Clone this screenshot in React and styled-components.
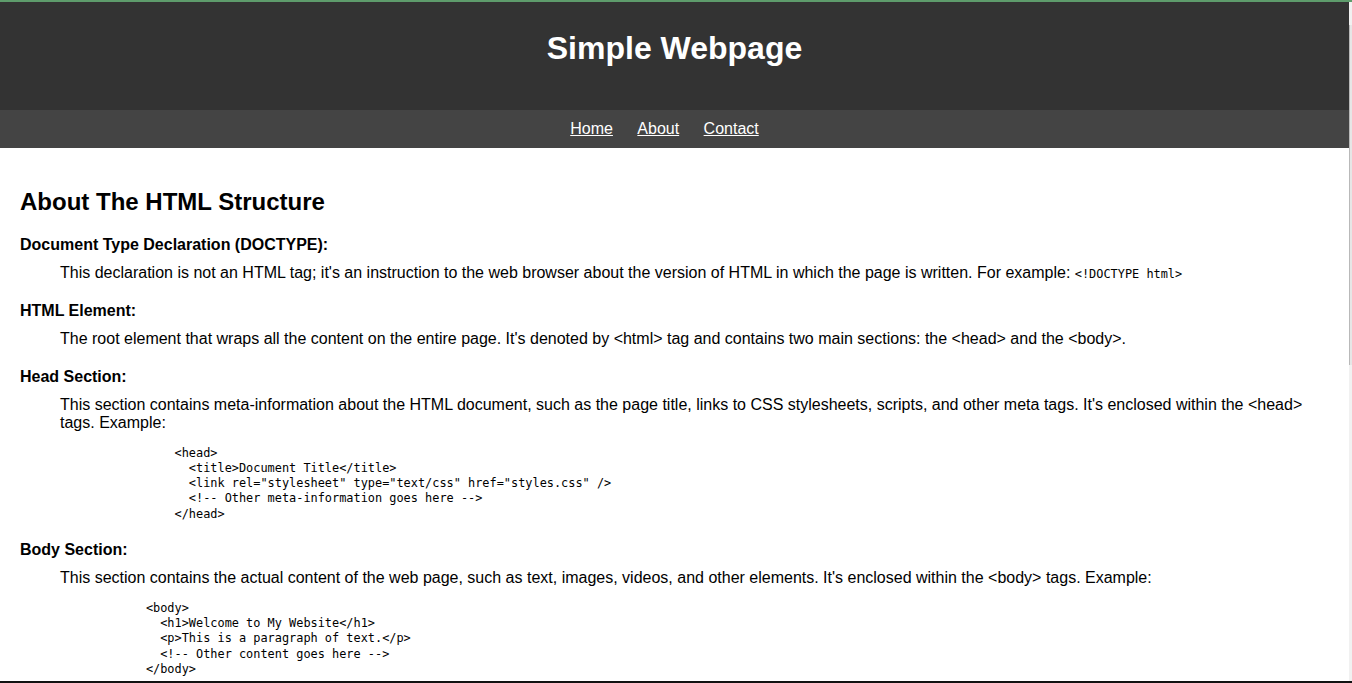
import React from "react";
import styled, { createGlobalStyle } from "styled-components";

const Global = createGlobalStyle`
  html, body { margin: 0; padding: 0; }
  html { scrollbar-width: none; }
  ::-webkit-scrollbar { display: none; }
  body {
    margin-right: 3px;
    font-family: "Liberation Sans", Arial, sans-serif;
    font-size: 16px;
    color: #000;
    background: #fff;
  }
`;

const TopLine = styled.div`
  position: fixed;
  top: 0;
  left: 0;
  right: 0;
  height: 2px;
  background: #5e9c6c;
  z-index: 10;
`;

const BottomLine = styled.div`
  position: fixed;
  bottom: 0;
  left: 0;
  right: 0;
  height: 2px;
  background: #111;
  z-index: 10;
`;

const ScrollTrack = styled.div`
  position: fixed;
  top: 2px;
  right: 0;
  bottom: 0;
  width: 3px;
  background: #f1f1f1;
  z-index: 9;
`;

const ScrollThumb = styled.div`
  position: absolute;
  top: 23px;
  left: 0;
  width: 3px;
  height: 340px;
  background: #e6e6e6;
  border-left: 1px solid #b9b9b9;
  box-sizing: border-box;
`;

const Header = styled.header`
  background: #333;
  color: #fff;
  text-align: center;
  padding: 30px 0 43px;
`;

const Title = styled.h1`
  margin: 0;
  font-size: 32px;
  line-height: 37px;
  font-weight: bold;
`;

const Nav = styled.nav`
  background: #444;
  display: flex;
  justify-content: center;
  gap: 4.45px;
  padding: 10px 0;
  line-height: 18px;
`;

const NavLink = styled.a`
  color: #fff;
  text-decoration: underline;
  margin-right: 20px;
`;

const Main = styled.main`
  padding: 0 20px 20px;
  display: flow-root;
`;

const Heading = styled.h2`
  font-size: 24px;
  line-height: 27.6px;
  margin: 40px 0 20px;
`;

const List = styled.dl`
  margin: 0;
`;

const Term = styled.dt`
  font-weight: bold;
  line-height: 18px;
  margin-top: 20px;
  &:first-child { margin-top: 0; }
`;

const Desc = styled.dd`
  margin: 10px 0 0 40px;
  line-height: 18px;
`;

const Code = styled.code`
  font-family: "DejaVu Sans Mono", "Liberation Mono", monospace;
  font-size: 11.9px;
  line-height: 1;
`;

const Pre = styled.pre`
  font-family: "DejaVu Sans Mono", "Liberation Mono", monospace;
  font-size: 11.9px;
  line-height: 15.25px;
  margin: 14px 0 -1px;
  padding-left: ${(p) => p.$indent}ch;
`;

const headCode = `<head>
  <title>Document Title</title>
  <link rel="stylesheet" type="text/css" href="styles.css" />
  <!-- Other meta-information goes here -->
</head>`;

const bodyCode = `<body>
  <h1>Welcome to My Website</h1>
  <p>This is a paragraph of text.</p>
  <!-- Other content goes here -->
</body>`;

export default function App() {
  return (
    <>
      <Global />
      <TopLine />
      <ScrollTrack>
        <ScrollThumb />
      </ScrollTrack>
      <Header>
        <Title>Simple Webpage</Title>
      </Header>
      <Nav>
        <NavLink href="#">Home</NavLink>
        <NavLink href="#">About</NavLink>
        <NavLink href="#">Contact</NavLink>
      </Nav>
      <Main>
        <Heading>About The HTML Structure</Heading>
        <List>
          <Term>Document Type Declaration (DOCTYPE):</Term>
          <Desc>
            This declaration is not an HTML tag; it's an instruction to the web
            browser about the version of HTML in which the page is written. For
            example: <Code>{"<!DOCTYPE html>"}</Code>
          </Desc>
          <Term>HTML Element:</Term>
          <Desc>
            The root element that wraps all the content on the entire page. It's
            denoted by {"<html>"} tag and contains two main sections: the{" "}
            {"<head>"} and the {"<body>"}.
          </Desc>
          <Term>Head Section:</Term>
          <Desc>
            This section contains meta-information about the HTML document, such
            as the page title, links to CSS stylesheets, scripts, and other meta
            tags. It's enclosed within the {"<head>"} tags. Example:
            <Pre $indent={16}>{headCode}</Pre>
          </Desc>
          <Term>Body Section:</Term>
          <Desc>
            This section contains the actual content of the web page, such as
            text, images, videos, and other elements. It's enclosed within the{" "}
            {"<body>"} tags. Example:
            <Pre $indent={12}>{bodyCode}</Pre>
          </Desc>
        </List>
      </Main>
      <BottomLine />
    </>
  );
}
